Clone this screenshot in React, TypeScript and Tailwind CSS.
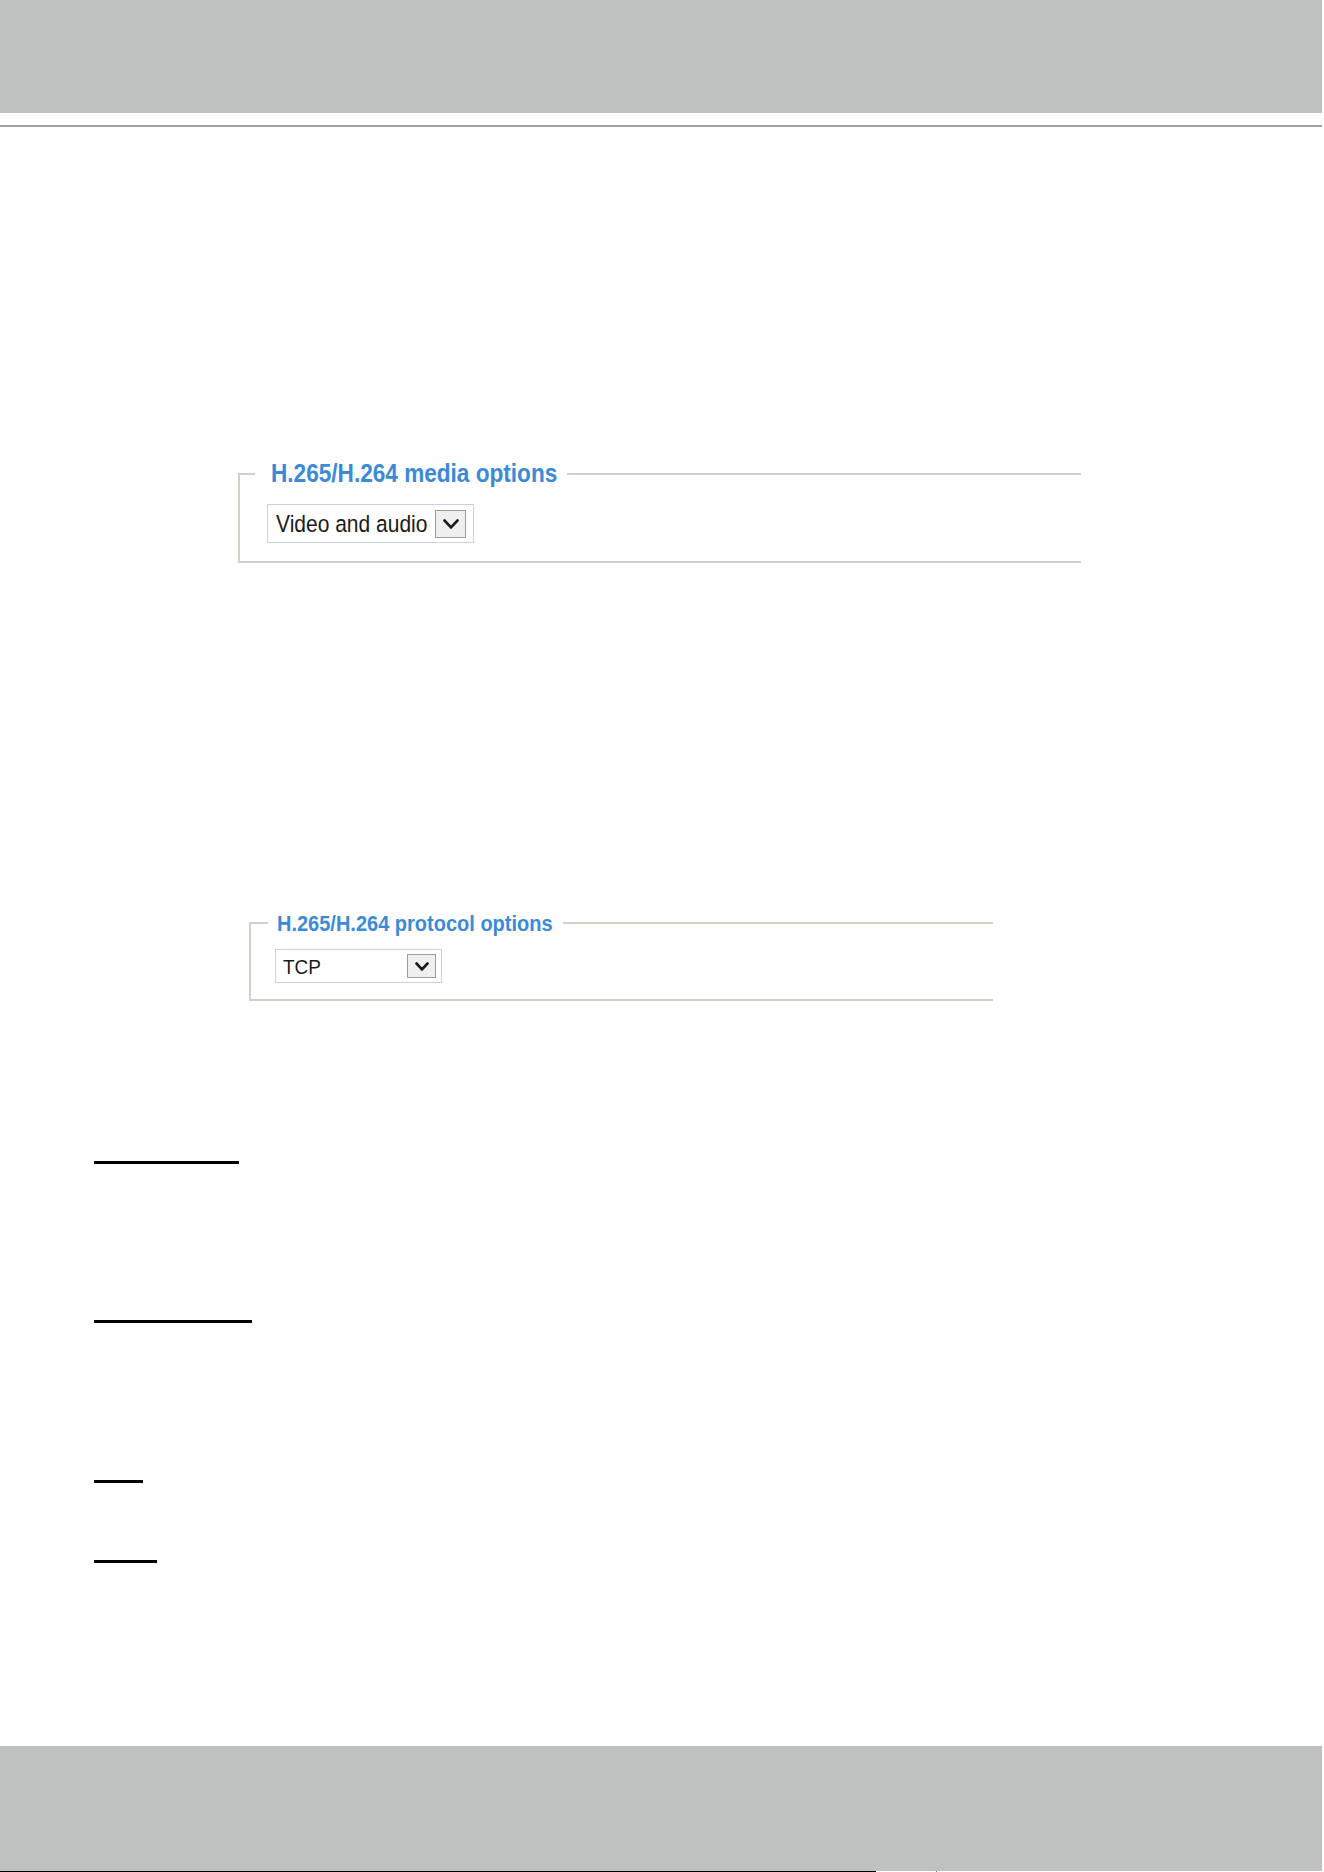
import { ReactNode } from 'react';

const Chevron = ({ w, h }: { w: number; h: number }) => (
  <svg width={w} height={h} viewBox={`0 0 ${w} ${h}`} fill="none">
    <polyline
      points={`1.6,1.6 ${w / 2},${h - 1.6} ${w - 1.6},1.6`}
      stroke="#1a1a1a"
      strokeWidth="2.8"
      strokeLinecap="round"
      strokeLinejoin="round"
    />
  </svg>
);

const Underline = ({ className }: { className: string }) => (
  <div className={`ml-[94px] h-[3px] bg-black ${className}`} />
);

const Legend = ({ children, className }: { children: ReactNode; className: string }) => (
  <legend className={`font-bold text-[#3b8ad8] ${className}`}>
    <span className="inline-block scale-y-[1.12]">{children}</span>
  </legend>
);

export default function App() {
  return (
    <div className="w-[1324px] h-[1872px] flex flex-col bg-white font-['Liberation_Sans',Arial,sans-serif]">
      {/* page header */}
      <div className="w-[1322px] h-[113px] bg-[#bfc1c0]" />
      <div className="mt-[12px] w-[1322px] h-[2px] bg-[#a3a3a3]" />

      {/* media options */}
      <fieldset className="mt-[333px] ml-[238px] w-[843px] border-2 border-r-0 border-[#d4d0c8]">
        <Legend className="ml-[15px] pl-4 pr-[10px] text-[22.6px] leading-[28px]">
          H.265/H.264 media options
        </Legend>
        <div className="pl-[27px] pt-[16px] pb-[18px]">
          <div className="w-[207px] h-[39px] flex items-center justify-between border border-[#c5d3e6] bg-white pl-[8px] pr-[7px]">
            <span className="text-[21px] leading-none text-[#1a1a1a] inline-block scale-y-[1.1]">Video and audio</span>
            <div className="w-[31px] h-[28px] flex items-center justify-center border border-[#9c9c9c] bg-[#efefef]">
              <Chevron w={16} h={10} />
            </div>
          </div>
        </div>
      </fieldset>

      {/* protocol options */}
      <fieldset className="mt-[348px] ml-[249px] w-[744px] border-2 border-r-0 border-[#d4d0c8]">
        <Legend className="ml-[17px] pl-[9px] pr-[10px] text-[20px] leading-[24px]">
          H.265/H.264 protocol options
        </Legend>
        <div className="pl-[24px] pt-[14px] pb-[16px]">
          <div className="w-[167px] h-[34px] flex items-center justify-between border border-[#c5d3e6] bg-white pl-[7px] pr-[5px]">
            <span className="text-[19px] leading-none text-[#1a1a1a] inline-block scale-y-[1.1]">TCP</span>
            <div className="w-[29px] h-[24px] flex items-center justify-center border border-[#9c9c9c] bg-[#efefef]">
              <Chevron w={14} h={9} />
            </div>
          </div>
        </div>
      </fieldset>

      {/* underlined headings */}
      <Underline className="mt-[160px] w-[145px]" />
      <Underline className="mt-[156px] w-[158px]" />
      <Underline className="mt-[157px] w-[49px]" />
      <Underline className="mt-[77px] w-[63px]" />

      {/* page footer */}
      <div className="mt-auto">
        <div className="w-[1322px] h-[125px] bg-[#bfc1c0]" />
        <div className="flex h-[1px]">
          <div className="w-[876px] bg-black" />
          <div className="ml-[60px] w-[1px] bg-[#2a9a9a]" />
        </div>
      </div>
    </div>
  );
}
